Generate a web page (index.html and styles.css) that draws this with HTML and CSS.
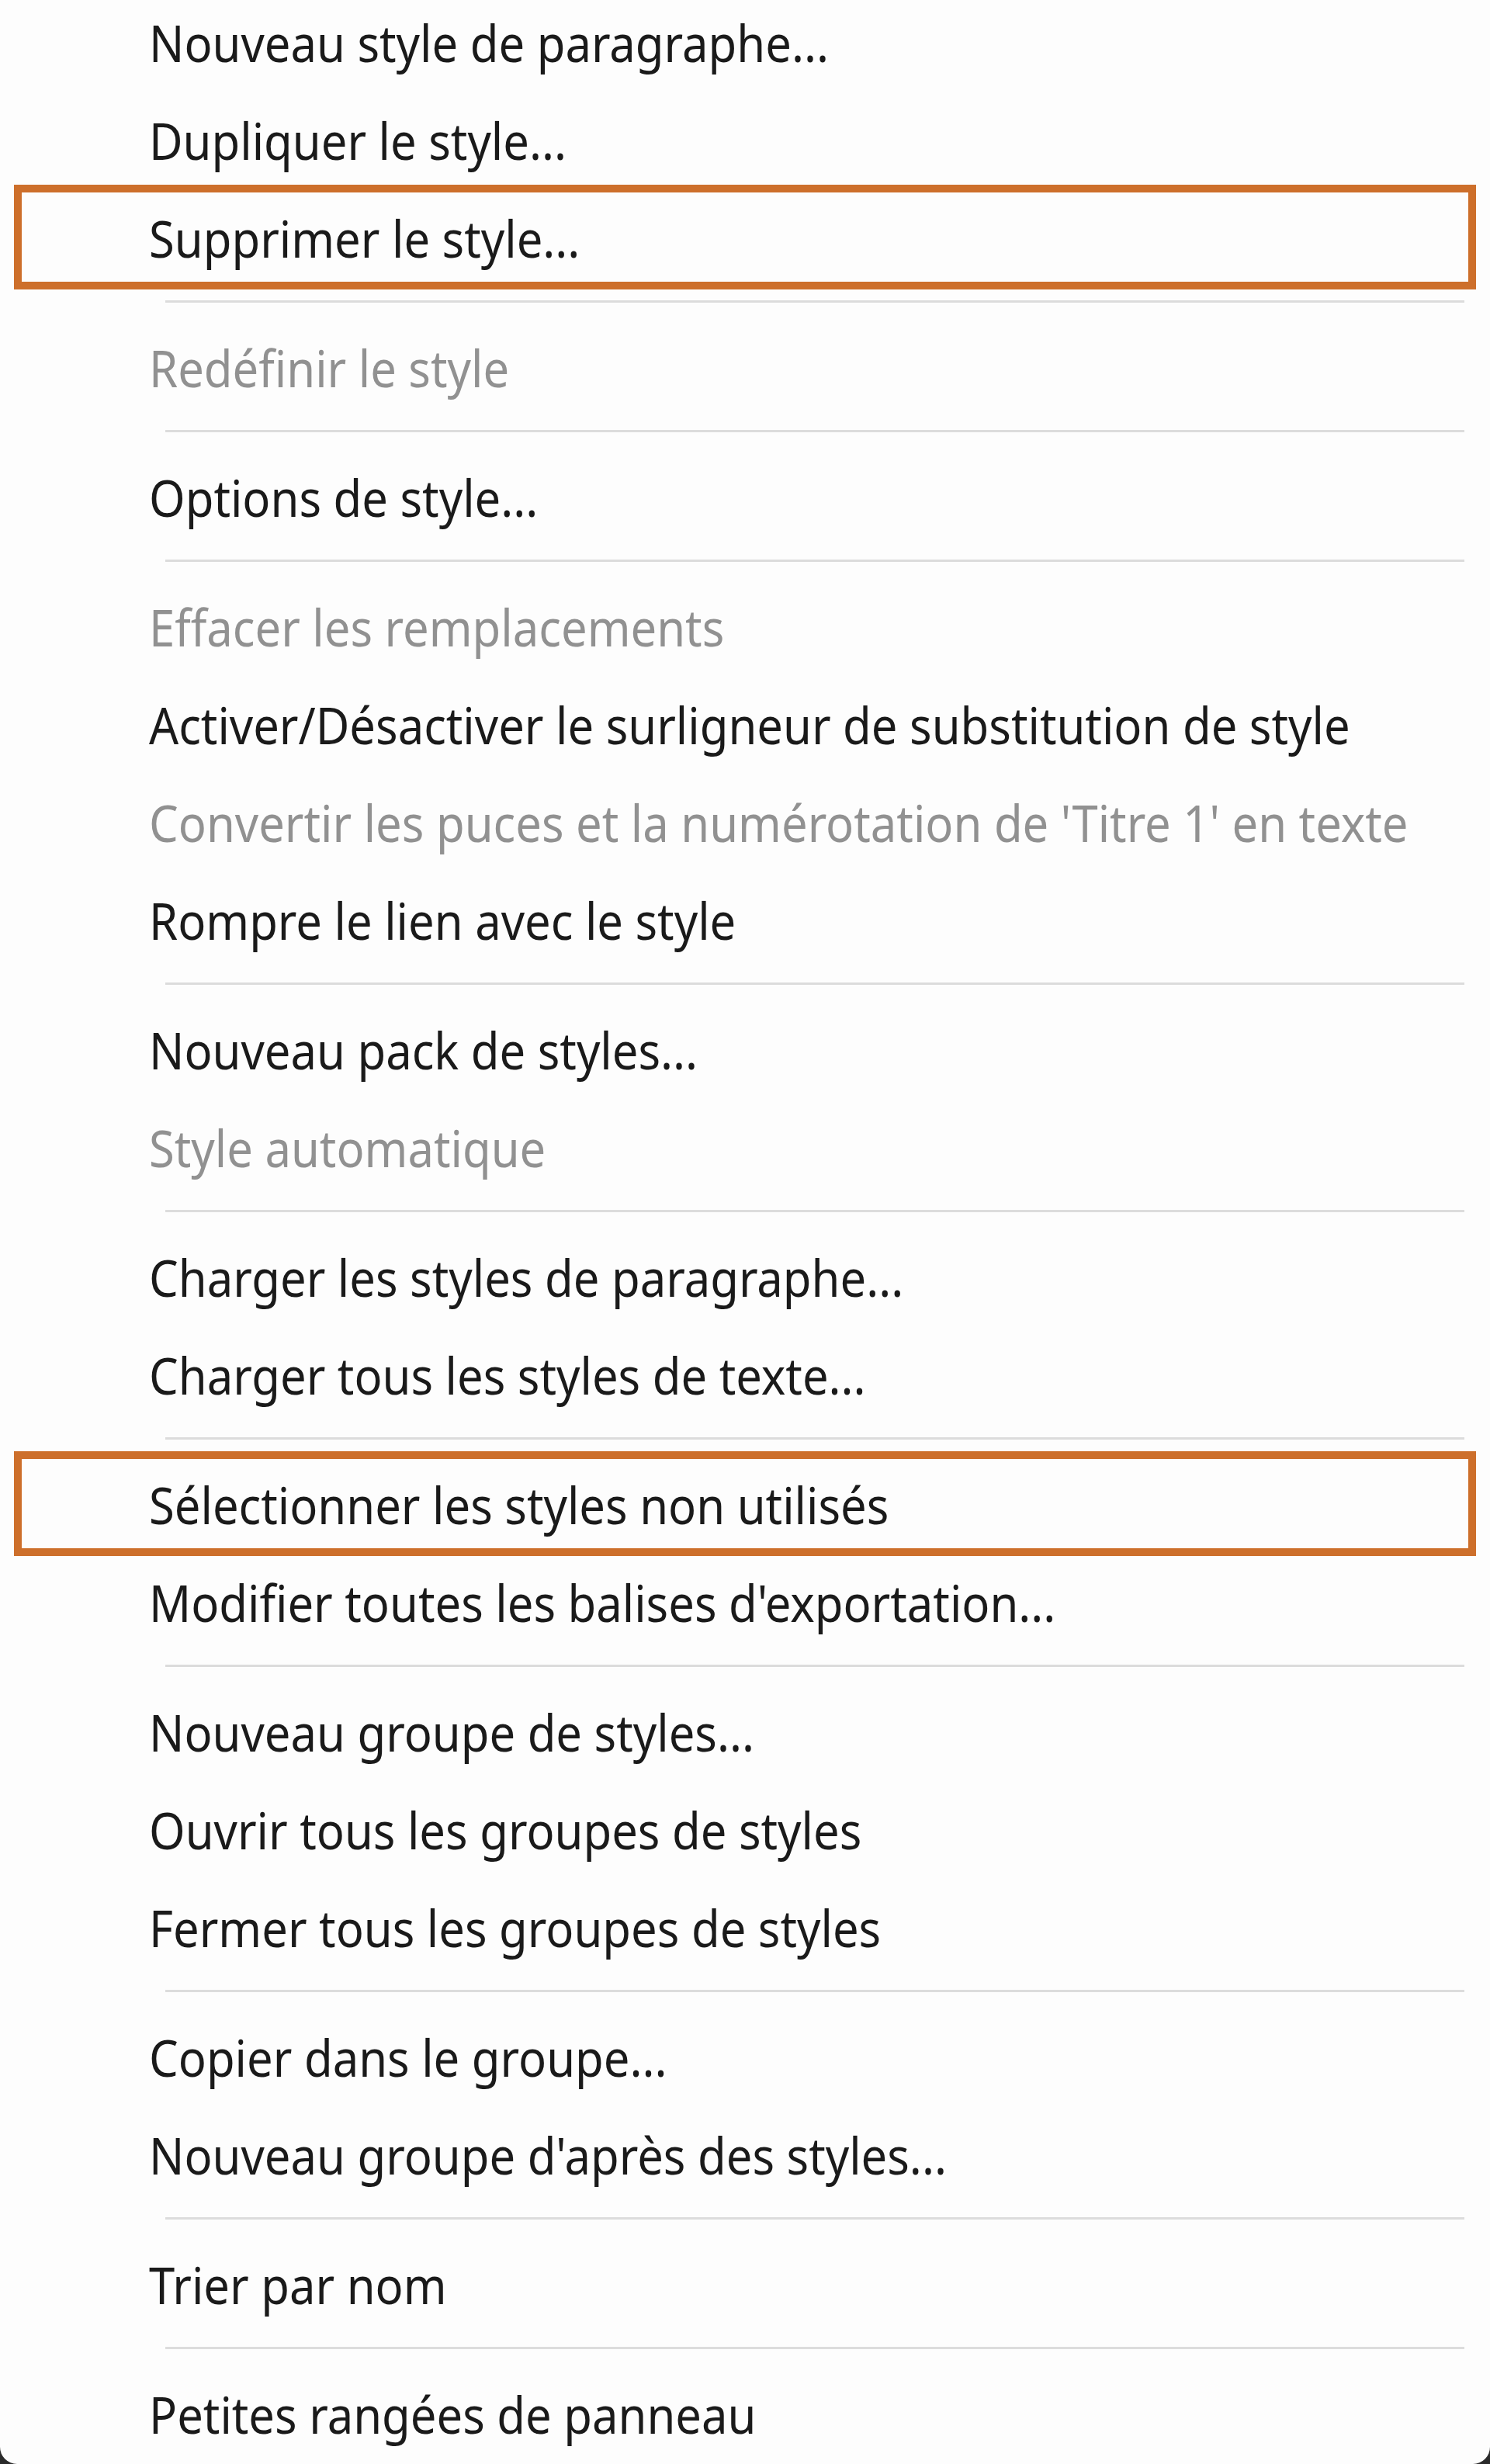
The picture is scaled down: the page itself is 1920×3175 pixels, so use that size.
FILE: index.html
```
<!DOCTYPE html>
<html lang="fr">
<head>
    <meta charset="UTF-8">
    <title>Menu du panneau Styles de paragraphe</title>
    <link rel="stylesheet" href="styles.css">
</head>
<body>
    <div class="menu">
        <ul class="menu-list">
            <!-- Styles -->
            <li class="item"><span class="label">Nouveau style de paragraphe...</span></li>
            <li class="item"><span class="label">Dupliquer le style...</span></li>
            <li class="item marked"><span class="label">Supprimer le style...</span></li>
            <li class="separator"></li>
            <li class="item disabled"><span class="label">Redéfinir le style</span></li>
            <li class="separator"></li>
            <li class="item"><span class="label">Options de style...</span></li>
            <li class="separator"></li>

            <!-- Remplacements -->
            <li class="item disabled"><span class="label">Effacer les remplacements</span></li>
            <li class="item"><span class="label">Activer/Désactiver le surligneur de substitution de style</span></li>
            <li class="item disabled"><span class="label">Convertir les puces et la numérotation de 'Titre 1' en texte</span></li>
            <li class="item"><span class="label">Rompre le lien avec le style</span></li>
            <li class="separator"></li>

            <li class="item"><span class="label">Nouveau pack de styles...</span></li>
            <li class="item disabled"><span class="label">Style automatique</span></li>
            <li class="separator"></li>

            <!-- Chargement -->
            <li class="item"><span class="label">Charger les styles de paragraphe...</span></li>
            <li class="item"><span class="label">Charger tous les styles de texte...</span></li>
            <li class="separator"></li>
            <li class="item marked"><span class="label">Sélectionner les styles non utilisés</span></li>
            <li class="item"><span class="label">Modifier toutes les balises d'exportation...</span></li>
            <li class="separator"></li>

            <!-- Groupes -->
            <li class="item"><span class="label">Nouveau groupe de styles...</span></li>
            <li class="item"><span class="label">Ouvrir tous les groupes de styles</span></li>
            <li class="item"><span class="label">Fermer tous les groupes de styles</span></li>
            <li class="separator"></li>
            <li class="item"><span class="label">Copier dans le groupe...</span></li>
            <li class="item"><span class="label">Nouveau groupe d'après des styles...</span></li>
            <li class="separator"></li>

            <li class="item"><span class="label">Trier par nom</span></li>
            <li class="separator"></li>
            <li class="item"><span class="label">Petites rangées de panneau</span></li>
        </ul>
    </div>
</body>
</html>
```

FILE: styles.css
```
body {
    margin: 0;
    padding: 0;
    background-color: #2b2b2b;
    font-family: "Noto Sans", "Open Sans", sans-serif;
}
.menu {
    height: 3175px;
    overflow: hidden;
    background-color: #fdfdfd;
    border-radius: 0 0 22px 22px;
}
.menu-list {
    list-style: none;
    margin: -9px 0 0 0;
    padding: 0;
}
.item {
    position: relative;
    height: 126px;
    line-height: 126px;
    padding-left: 192px;
    font-size: 66px;
    color: #1a1a1a;
    white-space: nowrap;
}
.label {
    display: inline-block;
    transform: scaleX(0.905);
    transform-origin: 0 50%;
}
.item.disabled {
    color: #919191;
}
.item.marked::after {
    content: "";
    position: absolute;
    top: -5px;
    bottom: -4px;
    left: 18px;
    right: 18px;
    border: 10px solid #cd6f2b;
}
.separator {
    height: 3px;
    margin: 18px 33px 20px 213px;
    background-color: #dcdcdc;
}
```
